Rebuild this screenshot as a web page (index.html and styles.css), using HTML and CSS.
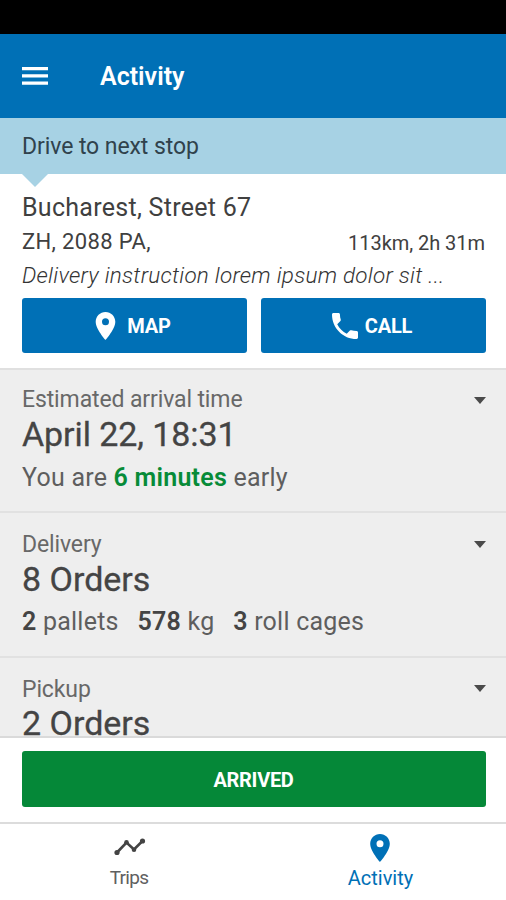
FILE: index.html
```html
<!DOCTYPE html>
<html lang="en">
<head>
<meta charset="utf-8">
<title>Activity</title>
<link rel="stylesheet" href="styles.css">
</head>
<body>
<div class="app">
  <div class="status-bar"></div>
  <header class="toolbar">
    <svg class="menu-icon" viewBox="0 0 26 18"><path d="M0 0h26v3.2H0zM0 7.3h26v3.2H0zM0 14.6h26v3.2H0z"/></svg>
    <h1 class="title">Activity</h1>
  </header>
  <div class="banner">Drive to next stop</div>
  <section class="stop">
    <div class="street">Bucharest, Street 67</div>
    <div class="place"><span>ZH, 2088 PA,</span><span class="distance">113km, 2h 31m</span></div>
    <div class="instruction">Delivery instruction lorem ipsum dolor sit ...</div>
    <div class="actions">
      <button class="btn"><svg class="pin" viewBox="5 2 14 20"><path d="M12 2C8.130 2 5 5.130 5 9c0 5.250 7 13 7 13s7-7.750 7-13c0-3.870-3.130-7-7-7zm0 9.500a2.500 2.500 0 0 1 0-5 2.500 2.500 0 0 1 0 5z"/></svg><span>MAP</span></button>
      <button class="btn"><svg class="phone" viewBox="3 3 18 18"><path d="M6.620 10.790c1.440 2.830 3.760 5.140 6.590 6.590l2.200-2.200c.27-.27.67-.36 1.020-.24 1.120.37 2.330.57 3.570.57.55 0 1 .45 1 1V20c0 .55-.45 1-1 1-9.390 0-17-7.610-17-17 0-.55.45-1 1-1h3.500c.55 0 1 .45 1 1 0 1.250.2 2.450.57 3.570.11.35.03.74-.25 1.020l-2.200 2.200z"/></svg><span>CALL</span></button>
    </div>
  </section>
  <main class="details">
    <section class="panel first">
      <div class="label"><span>Estimated arrival time</span><i class="caret"></i></div>
      <div class="value date">April 22, 18:31</div>
      <div class="summary">You are <b class="green">6 minutes</b> early</div>
    </section>
    <section class="panel">
      <div class="label"><span>Delivery</span><i class="caret"></i></div>
      <div class="value">8 Orders</div>
      <div class="summary amounts"><span><b>2</b> pallets</span><span><b>578</b> kg</span><span><b>3</b> roll cages</span></div>
    </section>
    <section class="panel last">
      <div class="label"><span>Pickup</span><i class="caret"></i></div>
      <div class="value">2 Orders</div>
    </section>
  </main>
  <div class="footer"><button class="btn arrive">ARRIVED</button></div>
  <nav class="tabs">
    <a class="tab"><span class="icon-box"><svg class="trend" viewBox="0 0 32 18"><path class="line" d="M3 14.500L12.500 4.500L20 11.500L28.500 3"/><circle cx="3" cy="14.500" r="2.600"/><circle cx="12.500" cy="4.300" r="2.300"/><circle cx="20" cy="11.800" r="2.300"/><circle cx="28.500" cy="3" r="2.600"/></svg></span><span class="trips">Trips</span></a>
    <a class="tab active"><span class="icon-box"><svg class="pin" viewBox="5 2 14 20"><path d="M12 2C8.130 2 5 5.130 5 9c0 5.250 7 13 7 13s7-7.750 7-13c0-3.870-3.130-7-7-7zm0 9.500a2.500 2.500 0 0 1 0-5 2.500 2.500 0 0 1 0 5z"/></svg></span><span>Activity</span></a>
  </nav>
</div>
</body>
</html>
```

FILE: styles.css
```css
* { box-sizing: border-box; }
body { margin: 0; font-family: Roboto, "Liberation Sans", sans-serif; color: #404040; background: #fff; }
svg { display: block; fill: currentColor; flex: none; }
.app { width: 506px; height: 900px; display: flex; flex-direction: column; overflow: hidden; }
.app > * { flex: none; }
.status-bar { height: 34px; background: #000; }
.toolbar { height: 84px; background: #0070b6; color: #fff; display: flex; align-items: center; padding-left: 22px; gap: 52px; }
.menu-icon { width: 26px; height: 18px; }
.title { margin: 2px 0 0; font-size: 25px; line-height: 34px; font-weight: 600; }
.banner { height: 56px; background: #a7d2e4; color: #30424c; padding: 12px 22px; font-size: 23px; letter-spacing: -0.080px; line-height: 33px; position: relative; white-space: nowrap; }
.banner::after { content: ""; position: absolute; left: 22px; top: 56px; border: 13px solid transparent; border-top-color: #a7d2e4; border-bottom: 0; }
.stop { height: 194px; padding: 18px 20px 0 22px; white-space: nowrap; }
.street { height: 33px; line-height: 32px; font-size: 25px; letter-spacing: 0.280px; }
.place { height: 34px; line-height: 34px; font-size: 22px; letter-spacing: 0.350px; display: flex; justify-content: space-between; padding-right: 1px; }
.distance { font-size: 20px; line-height: 36px; letter-spacing: -0.050px; }
.instruction { height: 39px; line-height: 32px; font-size: 22.500px; letter-spacing: 0.250px; font-style: italic; font-weight: 300; color: #333; }
.actions { display: grid; grid-template-columns: 1fr 1fr; gap: 14px; }
.btn { height: 55px; border: 0; border-radius: 3px; background: #0070b6; color: #fff; font: 700 20px/24px Roboto, "Liberation Sans", sans-serif; letter-spacing: -0.200px; display: flex; align-items: center; justify-content: center; padding: 0; }
.btn .pin { width: 21px; height: 28px; margin-right: 11px; }
.btn .phone { width: 26px; height: 26px; margin-right: 7px; }
.actions .btn { padding-right: 3px; }
.details { height: 370px; background: #eee; overflow: hidden; border-top: 2px solid #e0e0e0; border-bottom: 2px solid #dadada; white-space: nowrap; }
.panel { height: 145px; padding: 16px 20px 0 22px; border-bottom: 2px solid #e1e1e1; }
.panel.first { height: 143px; padding-top: 14px; }
.label { height: 29px; line-height: 32px; font-size: 23px; letter-spacing: -0.120px; color: #686868; display: flex; justify-content: space-between; align-items: flex-start; }
.caret { border: 6.500px solid transparent; border-top: 7px solid #4a4a4a; border-bottom: 0; margin-top: 12px; }
.first .caret { margin-top: 13px; }
.last .caret { margin-top: 11px; }
.value { height: 45px; line-height: 42px; font-size: 34px; color: #444; -webkit-text-stroke: 0.300px #444; }
.last .value { line-height: 41px; }
.date { letter-spacing: -0.080px; }
.summary { line-height: 36px; font-size: 25px; letter-spacing: 0.230px; color: #5e5e5e; }
.first .summary { padding-top: 2px; }
.summary b { font-weight: 600; color: #444; }
.summary .green { color: #078b38; }
.amounts { display: flex; gap: 18.800px; padding-top: 1px; }
.footer { height: 84px; padding: 13px 20px 0 22px; }
.arrive { width: 100%; height: 56px; background: #058838; letter-spacing: -0.300px; padding: 1px 1px 0 0; }
.tabs { height: 78px; border-top: 2px solid #dcdcdc; display: flex; }
.tab { width: 50%; display: flex; flex-direction: column; align-items: center; color: #606060; font-size: 19px; line-height: 24px; padding-top: 9px; }
.tab:first-child { padding-left: 7px; }
.trips { letter-spacing: -0.700px; margin-left: -2px; }
.tab.active { color: #0070b6; font-size: 20px; padding-left: 2px; }
.icon-box { height: 33px; display: flex; }
.tab .pin { width: 20px; height: 28px; margin: 1px 2px 0 0; }
.trend { width: 32px; height: 18px; margin-top: 5px; color: #444; }
.line { fill: none; stroke: currentColor; stroke-width: 2.600; }
```
